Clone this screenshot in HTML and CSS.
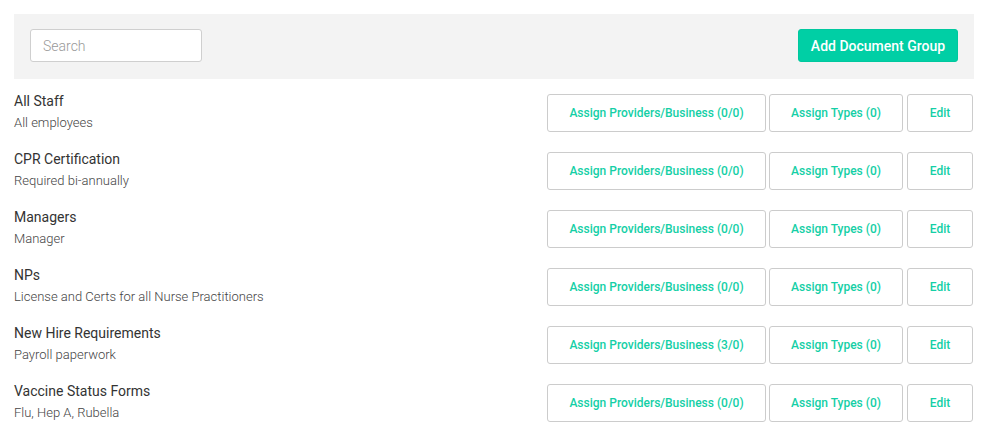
FILE: index.html
```html
<!DOCTYPE html>
<html>
<head>
<meta charset="utf-8">
<link rel="stylesheet" href="styles.css">
</head>
<body>
<div class="page">
  <div class="toolbar">
    <input class="search" type="text" placeholder="Search">
    <button class="btn-primary">Add Document Group</button>
  </div>
  <div class="list">
    <div class="row">
      <div class="info"><div class="title">All Staff</div><div class="sub">All employees</div></div>
      <div class="actions"><button class="btn btn-assign">Assign Providers/Business (0/0)</button><button class="btn btn-types">Assign Types (0)</button><button class="btn btn-edit">Edit</button></div>
    </div>
    <div class="row">
      <div class="info"><div class="title">CPR Certification</div><div class="sub">Required bi-annually</div></div>
      <div class="actions"><button class="btn btn-assign">Assign Providers/Business (0/0)</button><button class="btn btn-types">Assign Types (0)</button><button class="btn btn-edit">Edit</button></div>
    </div>
    <div class="row">
      <div class="info"><div class="title">Managers</div><div class="sub">Manager</div></div>
      <div class="actions"><button class="btn btn-assign">Assign Providers/Business (0/0)</button><button class="btn btn-types">Assign Types (0)</button><button class="btn btn-edit">Edit</button></div>
    </div>
    <div class="row">
      <div class="info"><div class="title">NPs</div><div class="sub">License and Certs for all Nurse Practitioners</div></div>
      <div class="actions"><button class="btn btn-assign">Assign Providers/Business (0/0)</button><button class="btn btn-types">Assign Types (0)</button><button class="btn btn-edit">Edit</button></div>
    </div>
    <div class="row">
      <div class="info"><div class="title">New Hire Requirements</div><div class="sub">Payroll paperwork</div></div>
      <div class="actions"><button class="btn btn-assign">Assign Providers/Business (3/0)</button><button class="btn btn-types">Assign Types (0)</button><button class="btn btn-edit">Edit</button></div>
    </div>
    <div class="row">
      <div class="info"><div class="title">Vaccine Status Forms</div><div class="sub">Flu, Hep A, Rubella</div></div>
      <div class="actions"><button class="btn btn-assign">Assign Providers/Business (0/0)</button><button class="btn btn-types">Assign Types (0)</button><button class="btn btn-edit">Edit</button></div>
    </div>
  </div>
</div>
</body>
</html>
```
FILE: styles.css
```css
html, body {
  margin: 0;
  padding: 0;
  background: #fff;
}
body {
  font-family: Roboto, "Liberation Sans", sans-serif;
  color: #333;
}
.page {
  padding: 14px 14px 0 14px;
  width: 960px;
}
.toolbar {
  background: #f3f3f3;
  height: 65px;
  padding: 0 16px;
  display: flex;
  align-items: center;
  justify-content: space-between;
  box-sizing: border-box;
}
.search {
  width: 172px;
  height: 33px;
  box-sizing: border-box;
  border: 1px solid #cfcfcf;
  border-radius: 3px;
  background: #fff;
  padding: 0 12px;
  font-family: Roboto, "Liberation Sans", sans-serif;
  font-size: 14px;
  font-weight: 300;
  color: #333;
  margin-top: -2px;
  outline: none;
}
.search::placeholder {
  color: #999;
}
.btn-primary {
  height: 33px;
  width: 160px;
  border: 1px solid #00c89e;
  border-radius: 3px;
  background: #00cfa5;
  color: #fff;
  font-family: Roboto, "Liberation Sans", sans-serif;
  font-size: 14px;
  font-weight: 500;
  padding: 0;
  margin-top: -2px;
}
.list {
  padding-top: 12px;
}
.row {
  display: flex;
  justify-content: space-between;
  align-items: flex-start;
  height: 58px;
}
.title {
  font-size: 14px;
  line-height: 21px;
  color: #333;
}
.sub {
  font-size: 13px;
  font-weight: 300;
  line-height: 21px;
  color: #444;
}
.actions {
  display: flex;
  margin-top: 3px;
  margin-right: 1px;
}
.btn {
  height: 38px;
  box-sizing: border-box;
  border: 1px solid #cccccc;
  border-radius: 3px;
  background: #fff;
  color: #14cfa6;
  font-family: Roboto, "Liberation Sans", sans-serif;
  font-size: 12px;
  font-weight: 500;
  padding: 0;
  text-align: center;
}
.btn-assign {
  width: 219px;
}
.btn-types {
  width: 134px;
  margin-left: 3px;
}
.btn-edit {
  width: 66px;
  margin-left: 4px;
}
```
